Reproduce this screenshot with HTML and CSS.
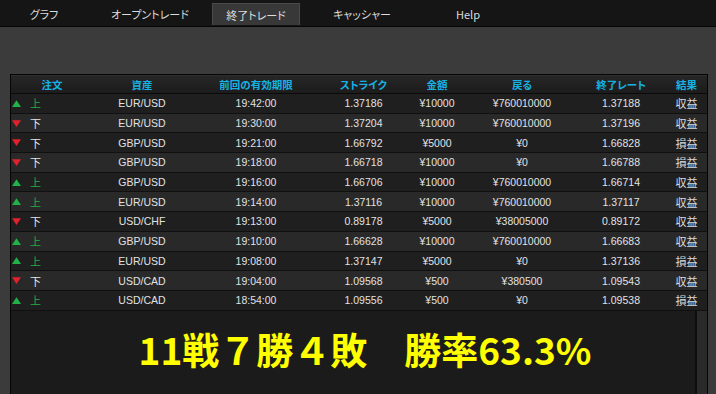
FILE: index.html
```html
<!DOCTYPE html>
<html lang="ja">
<head>
<meta charset="utf-8">
<title>終了トレード</title>
<link rel="stylesheet" href="styles.css">
</head>
<body>
<nav class="nav">
  <div class="tab">グラフ</div>
  <div class="tab">オープントレード</div>
  <div class="tab active">終了トレード</div>
  <div class="tab">キャッシャー</div>
  <div class="tab">Help</div>
</nav>
<main class="main">
  <section class="panel">
    <div class="row head">
      <div class="c">注文</div>
      <div class="c">資産</div>
      <div class="c">前回の有効期限</div>
      <div class="c">ストライク</div>
      <div class="c">金額</div>
      <div class="c">戻る</div>
      <div class="c">終了レート</div>
      <div class="c">結果</div>
    </div>
    <div class="rows">
      <div class="row"><div class="dir up"><svg class="arr" viewBox="0 0 8 6"><polygon points="0,6 8,6 4,0"/></svg><span>上</span></div><div class="c">EUR/USD</div><div class="c">19:42:00</div><div class="c">1.37186</div><div class="c">¥10000</div><div class="c">¥760010000</div><div class="c">1.37188</div><div class="c jp">収益</div></div>
      <div class="row"><div class="dir down"><svg class="arr" viewBox="0 0 8 6"><polygon points="0,0 8,0 4,6"/></svg><span>下</span></div><div class="c">EUR/USD</div><div class="c">19:30:00</div><div class="c">1.37204</div><div class="c">¥10000</div><div class="c">¥760010000</div><div class="c">1.37196</div><div class="c jp">収益</div></div>
      <div class="row"><div class="dir down"><svg class="arr" viewBox="0 0 8 6"><polygon points="0,0 8,0 4,6"/></svg><span>下</span></div><div class="c">GBP/USD</div><div class="c">19:21:00</div><div class="c">1.66792</div><div class="c">¥5000</div><div class="c">¥0</div><div class="c">1.66828</div><div class="c jp">損益</div></div>
      <div class="row"><div class="dir down"><svg class="arr" viewBox="0 0 8 6"><polygon points="0,0 8,0 4,6"/></svg><span>下</span></div><div class="c">GBP/USD</div><div class="c">19:18:00</div><div class="c">1.66718</div><div class="c">¥10000</div><div class="c">¥0</div><div class="c">1.66788</div><div class="c jp">損益</div></div>
      <div class="row"><div class="dir up"><svg class="arr" viewBox="0 0 8 6"><polygon points="0,6 8,6 4,0"/></svg><span>上</span></div><div class="c">GBP/USD</div><div class="c">19:16:00</div><div class="c">1.66706</div><div class="c">¥10000</div><div class="c">¥760010000</div><div class="c">1.66714</div><div class="c jp">収益</div></div>
      <div class="row"><div class="dir up"><svg class="arr" viewBox="0 0 8 6"><polygon points="0,6 8,6 4,0"/></svg><span>上</span></div><div class="c">EUR/USD</div><div class="c">19:14:00</div><div class="c">1.37116</div><div class="c">¥10000</div><div class="c">¥760010000</div><div class="c">1.37117</div><div class="c jp">収益</div></div>
      <div class="row"><div class="dir down"><svg class="arr" viewBox="0 0 8 6"><polygon points="0,0 8,0 4,6"/></svg><span>下</span></div><div class="c">USD/CHF</div><div class="c">19:13:00</div><div class="c">0.89178</div><div class="c">¥5000</div><div class="c">¥38005000</div><div class="c">0.89172</div><div class="c jp">収益</div></div>
      <div class="row"><div class="dir up"><svg class="arr" viewBox="0 0 8 6"><polygon points="0,6 8,6 4,0"/></svg><span>上</span></div><div class="c">GBP/USD</div><div class="c">19:10:00</div><div class="c">1.66628</div><div class="c">¥10000</div><div class="c">¥760010000</div><div class="c">1.66683</div><div class="c jp">収益</div></div>
      <div class="row"><div class="dir up"><svg class="arr" viewBox="0 0 8 6"><polygon points="0,6 8,6 4,0"/></svg><span>上</span></div><div class="c">EUR/USD</div><div class="c">19:08:00</div><div class="c">1.37147</div><div class="c">¥5000</div><div class="c">¥0</div><div class="c">1.37136</div><div class="c jp">損益</div></div>
      <div class="row"><div class="dir down"><svg class="arr" viewBox="0 0 8 6"><polygon points="0,0 8,0 4,6"/></svg><span>下</span></div><div class="c">USD/CAD</div><div class="c">19:04:00</div><div class="c">1.09568</div><div class="c">¥500</div><div class="c">¥380500</div><div class="c">1.09543</div><div class="c jp">収益</div></div>
      <div class="row"><div class="dir up"><svg class="arr" viewBox="0 0 8 6"><polygon points="0,6 8,6 4,0"/></svg><span>上</span></div><div class="c">USD/CAD</div><div class="c">18:54:00</div><div class="c">1.09556</div><div class="c">¥500</div><div class="c">¥0</div><div class="c">1.09538</div><div class="c jp">損益</div></div>
    </div>
    <div class="body">
      <div class="summary">11戦７勝４敗　勝率63.3%</div>
      <div class="scroll"></div>
    </div>
  </section>
</main>
</body>
</html>
```

FILE: styles.css
```css
html, body {
  margin: 0;
  padding: 0;
}
body {
  width: 716px;
  height: 394px;
  overflow: hidden;
  background: #3b3b3b;
  font-family: "Liberation Sans", "Noto Sans CJK JP", sans-serif;
  color: #e2e2e2;
}
.nav {
  height: 26px;
  background: #151515;
  border-bottom: 1px solid #050505;
  display: flex;
  gap: 18px;
  font-family: "Noto Sans CJK JP", sans-serif;
  font-feature-settings: "palt";
  font-size: 11px;
  color: #dcdcdc;
}
.tab {
  width: 88px;
  display: flex;
  align-items: center;
  justify-content: center;
  padding-top: 1px;
}
.tab.active {
  margin-top: 3px;
  height: 22px;
  box-sizing: border-box;
  background: #383838;
  border: 1px solid #4a4a4a;
  border-bottom: none;
  padding-top: 0;
}
.main {
  padding: 47px 8px 0 10px;
}
.panel {
  height: 320px;
  box-sizing: border-box;
  border: 1px solid #050505;
  border-bottom: none;
  background: #1b1b1b;
  display: flex;
  flex-direction: column;
}
.row {
  display: grid;
  grid-template-columns: 82px 98px 130px 85px 62px 108px 90px 1fr;
  align-items: center;
  height: 19.7px;
  box-sizing: border-box;
  border-bottom: 1px solid #101010;
  font-size: 10.5px;
  background: #1f1f1f;
}
.rows .row:nth-child(even) {
  background: #292929;
}
.row.head {
  height: 19px;
  background: linear-gradient(#262626, #1c1c1c);
  border-top: 1px solid #2e2e2e;
  border-bottom: 1px solid #0a0a0a;
  font-family: "Noto Sans CJK JP", sans-serif;
  font-feature-settings: "palt";
  font-weight: 700;
  font-size: 10.5px;
  color: #17b2e4;
}
.c {
  text-align: center;
  white-space: nowrap;
}
.jp {
  font-family: "Noto Sans CJK JP", sans-serif;
  font-size: 11px;
  color: #dcdcdc;
}
.dir {
  display: flex;
  align-items: center;
  padding-left: 1px;
  font-family: "Noto Sans CJK JP", sans-serif;
  font-size: 11px;
}
.arr {
  width: 9px;
  height: 7px;
  margin-right: 9px;
}
.up .arr { fill: #21b24a; }
.up span { color: #22aa44; }
.down .arr { fill: #e0222c; }
.down span { color: #e6e6e6; }
.body {
  flex: 1;
  display: flex;
}
.summary {
  flex: 1;
  padding: 14px 0 0 24px;
  text-align: center;
  font-family: "Noto Sans CJK JP", sans-serif;
  font-weight: 700;
  font-size: 37px;
  line-height: 48px;
  color: #ffff00;
  white-space: nowrap;
}
.scroll {
  width: 10px;
  border-left: 2px solid #0e0e0e;
  background: #2a2a2a;
}
```
